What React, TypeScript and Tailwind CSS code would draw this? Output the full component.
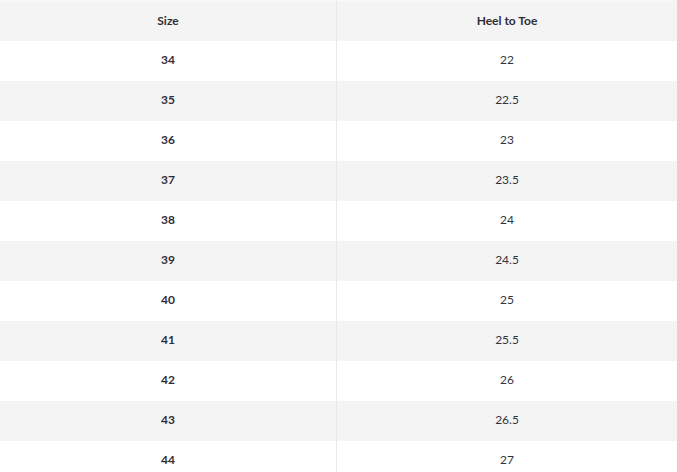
import React from "react";

const rows: [string, string][] = [
  ["34", "22"],
  ["35", "22.5"],
  ["36", "23"],
  ["37", "23.5"],
  ["38", "24"],
  ["39", "24.5"],
  ["40", "25"],
  ["41", "25.5"],
  ["42", "26"],
  ["43", "26.5"],
  ["44", "27"],
];

export default function App() {
  return (
    <div
      className="w-[677px] h-[472px] overflow-hidden bg-white"
      style={{ fontFamily: "Lato, 'Liberation Sans', sans-serif" }}
    >
      <div className="grid grid-cols-[337px_1fr] h-[41px] border-t border-[#f8f8f8] bg-[#f4f4f4] text-[12px] font-bold text-[#2e2e38]">
        <div className="flex items-center justify-center border-r border-[#e8e8e8]">Size</div>
        <div className="flex items-center justify-center">Heel to Toe</div>
      </div>
      {rows.map(([s, h], i) => (
        <div
          key={s}
          className={
            "grid grid-cols-[337px_1fr] h-10 " + (i % 2 === 1 ? "bg-[#f4f4f4]" : "bg-white")
          }
        >
          <div className="flex items-center justify-center pb-[2px] border-r border-[#e8e8e8] text-[12px] font-bold text-[#2e2e38]">
            {s}
          </div>
          <div className="flex items-center justify-center pb-[2px] text-[12px] text-[#33333d]">{h}</div>
        </div>
      ))}
    </div>
  );
}
